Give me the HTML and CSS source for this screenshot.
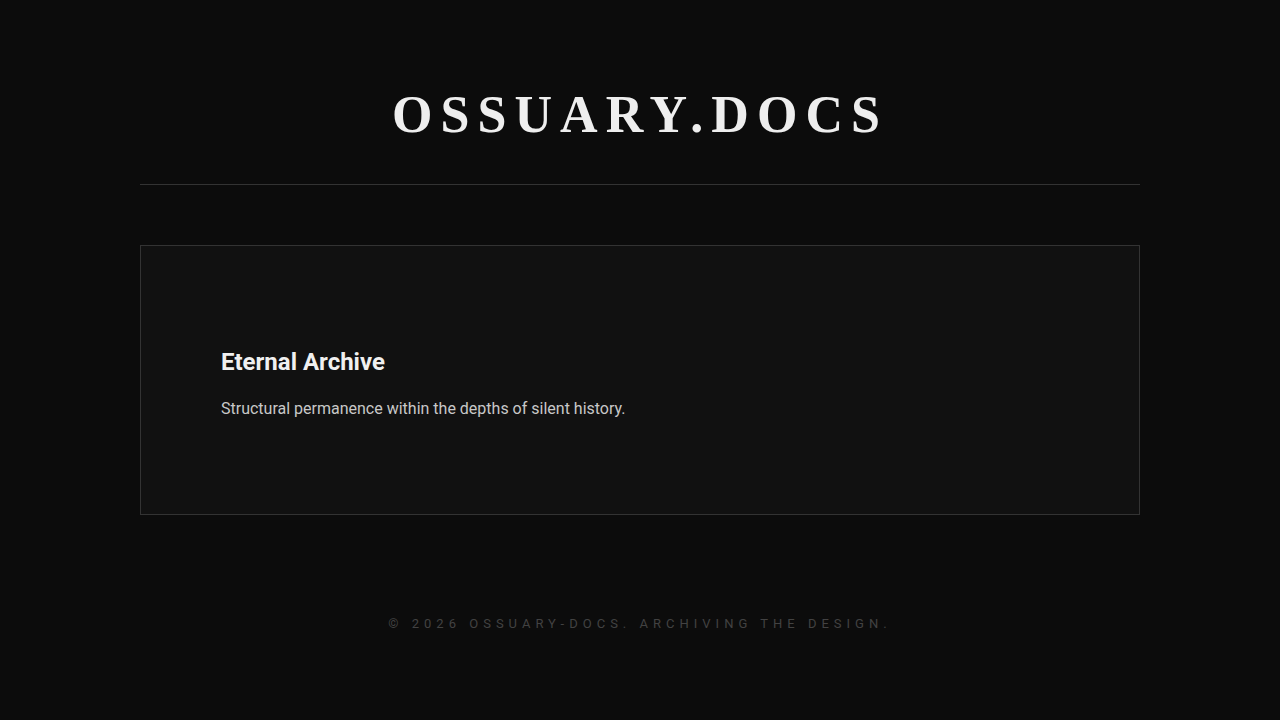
FILE: index.html
```html
<!DOCTYPE html>
<html lang="en">

<head>
    <meta charset="UTF-8">
    <meta name="viewport" content="width=device-width, initial-scale=1.0">
    <title>Ossuary.docs</title>
    <link rel="stylesheet" href="styles.css">
</head>

<body>
    <div class="container">
        <header class="site-header">
            <h1 class="logo">OSSUARY.DOCS</h1>
        </header>

        <main>
            <section class="card">
                <h2>Eternal Archive</h2>
                <p>Structural permanence within the depths of silent history.</p>
            </section>
        </main>

        <footer class="site-footer">
            &copy; 2026 Ossuary-Docs. Archiving the design.
        </footer>
    </div>
</body>

</html>
```

FILE: styles.css
```css
body {
    margin: 0;
    background-color: #0c0c0c;
    color: #eeeeee;
    font-family: Roboto, 'Noto Sans', sans-serif;
}

.container {
    max-width: 1000px;
    margin: 0 auto;
}

.site-header {
    padding: 84px 0 38px;
    border-bottom: 1px solid #333;
    text-align: center;
}

.logo {
    margin: 0;
    font-family: 'Liberation Serif', serif;
    font-weight: 700;
    font-size: 52px;
    line-height: 62px;
    letter-spacing: 0.155em;
    color: #eeeeee;
}

main {
    padding-top: 60px;
}

.card {
    background-color: #111111;
    border: 1px solid #333;
    padding: 102px 80px 93px;
}

.card h2 {
    margin: 0 0 20px;
    font-size: 24px;
    font-weight: 700;
    line-height: 1.2;
    color: #f0f0f0;
}

.card p {
    margin: 0;
    font-size: 16px;
    line-height: 1.5;
    color: #c8c8c8;
}

.site-footer {
    padding: 101px 0 99px;
    text-align: center;
    font-size: 13px;
    letter-spacing: 0.385em;
    text-transform: uppercase;
    color: #424242;
}
```
